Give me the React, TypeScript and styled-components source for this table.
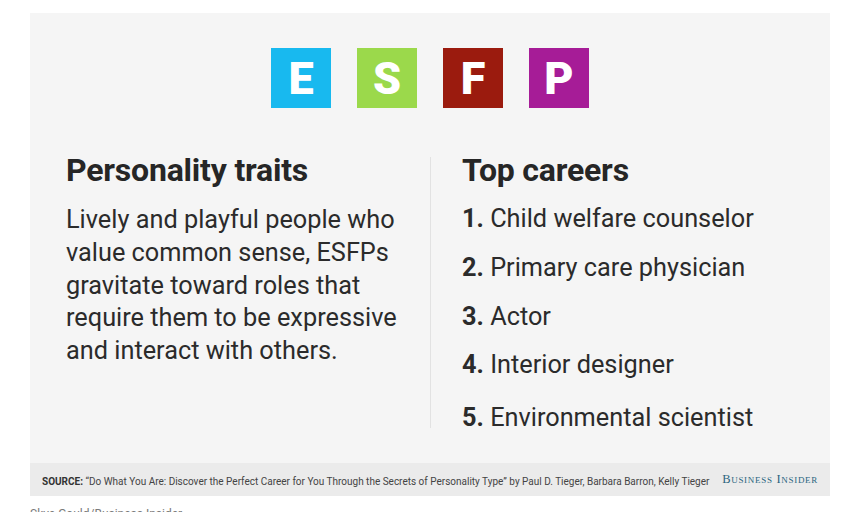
import React from "react";
import styled, { createGlobalStyle } from "styled-components";

const GlobalStyle = createGlobalStyle`
  html, body {
    margin: 0;
    padding: 0;
    background: #ffffff;
  }
  body {
    font-family: Roboto, "Noto Sans", Arial, sans-serif;
    overflow: hidden;
  }
`;

const Page = styled.div`
  padding: 13px 23px 0 30px;
  width: 853px;
  box-sizing: border-box;
`;

const Card = styled.div`
  width: 800px;
  background: #f5f5f5;
  display: flex;
  flex-direction: column;
`;

const LetterRow = styled.div`
  display: flex;
  justify-content: center;
  gap: 26px;
  padding-top: 35px;
`;

const LetterBox = styled.div<{ $bg: string }>`
  width: 60px;
  height: 60px;
  background: ${(p) => p.$bg};
  color: #ffffff;
  display: flex;
  align-items: center;
  justify-content: center;
  font-family: Roboto, Arial, sans-serif;
  font-weight: 900;
  font-size: 45px;
  line-height: 1;
`;

const Columns = styled.div`
  display: grid;
  grid-template-columns: 400px 400px;
  margin-top: 42px;
  height: 313px;
`;

const Column = styled.div<{ $divider?: boolean }>`
  padding-left: ${(p) => (p.$divider ? "31px" : "36px")};
  border-left: ${(p) => (p.$divider ? "1px solid #e2e2e2" : "none")};
  height: ${(p) => (p.$divider ? "271px" : "auto")};
  margin-top: ${(p) => (p.$divider ? "7px" : "2px")};
`;

const Heading = styled.h2<{ $shift?: number }>`
  margin: ${(p) => (p.$shift ? `-${p.$shift}px` : "0")} 0 0;
  font-family: Roboto, Arial, sans-serif;
  font-weight: 700;
  font-size: 32px;
  line-height: 36px;
  color: #262626;
  letter-spacing: -0.2px;
`;

const Body = styled.p`
  margin: 16px 0 0;
  font-family: Roboto, Arial, sans-serif;
  font-size: 25.3px;
  line-height: 32.75px;
  color: #2b2b2b;
`;

const CareerList = styled.ol`
  list-style: none;
  margin: 15px 0 0;
  padding: 0;
`;

const Career = styled.li<{ $gap: number }>`
  margin-top: ${(p) => p.$gap}px;
  font-family: Roboto, Arial, sans-serif;
  font-size: 25.3px;
  line-height: 32px;
  color: #2b2b2b;
`;

const Num = styled.span`
  font-weight: 700;
`;

const SourceBar = styled.div`
  display: flex;
  align-items: center;
  height: 33px;
  background: #ebebeb;
  padding: 0 12px;
`;

const SourceBox = styled.div`
  width: 668px;
  overflow: visible;
  white-space: nowrap;
`;

const SourceText = styled.span`
  font-family: Roboto, Arial, sans-serif;
  font-size: 11px;
  color: #444444;
  display: inline-block;
  transform: scaleX(0.908);
  transform-origin: left center;
`;

const SourceLabel = styled.b`
  font-weight: 700;
  color: #333333;
`;

const Brand = styled.span`
  margin-left: auto;
  font-family: "Liberation Serif", "Times New Roman", serif;
  font-variant: small-caps;
  font-size: 12.5px;
  letter-spacing: 0.7px;
  color: #2a6580;
  white-space: nowrap;
`;

const Caption = styled.div`
  margin-top: 11px;
  font-family: Roboto, Arial, sans-serif;
  font-size: 12px;
  color: #7a7a7a;
`;

const letters = [
  { ch: "E", bg: "#18b9ef" },
  { ch: "S", bg: "#9bd94b" },
  { ch: "F", bg: "#9b1b0e" },
  { ch: "P", bg: "#a61c97" },
];

const careers = [
  { n: "1.", t: "Child welfare counselor", gap: 0 },
  { n: "2.", t: "Primary care physician", gap: 17 },
  { n: "3.", t: "Actor", gap: 17 },
  { n: "4.", t: "Interior designer", gap: 16 },
  { n: "5.", t: "Environmental scientist", gap: 21 },
];

export default function App() {
  return (
    <>
      <GlobalStyle />
      <Page>
        <Card>
          <LetterRow>
            {letters.map((l) => (
              <LetterBox key={l.ch} $bg={l.bg}>
                {l.ch}
              </LetterBox>
            ))}
          </LetterRow>
          <Columns>
            <Column>
              <Heading>Personality traits</Heading>
              <Body>
                Lively and playful people who value common sense, ESFPs
                gravitate toward roles that require them to be expressive and
                interact with others.
              </Body>
            </Column>
            <Column $divider>
              <Heading $shift={5}>Top careers</Heading>
              <CareerList>
                {careers.map((c) => (
                  <Career key={c.n} $gap={c.gap}>
                    <Num>{c.n}</Num> {c.t}
                  </Career>
                ))}
              </CareerList>
            </Column>
          </Columns>
          <SourceBar>
            <SourceBox>
              <SourceText>
                <SourceLabel>SOURCE:</SourceLabel> “Do What You Are: Discover
                the Perfect Career for You Through the Secrets of Personality
                Type” by Paul D. Tieger, Barbara Barron, Kelly Tieger
              </SourceText>
            </SourceBox>
            <Brand>Business Insider</Brand>
          </SourceBar>
        </Card>
        <Caption>Skye Gould/Business Insider</Caption>
      </Page>
    </>
  );
}
